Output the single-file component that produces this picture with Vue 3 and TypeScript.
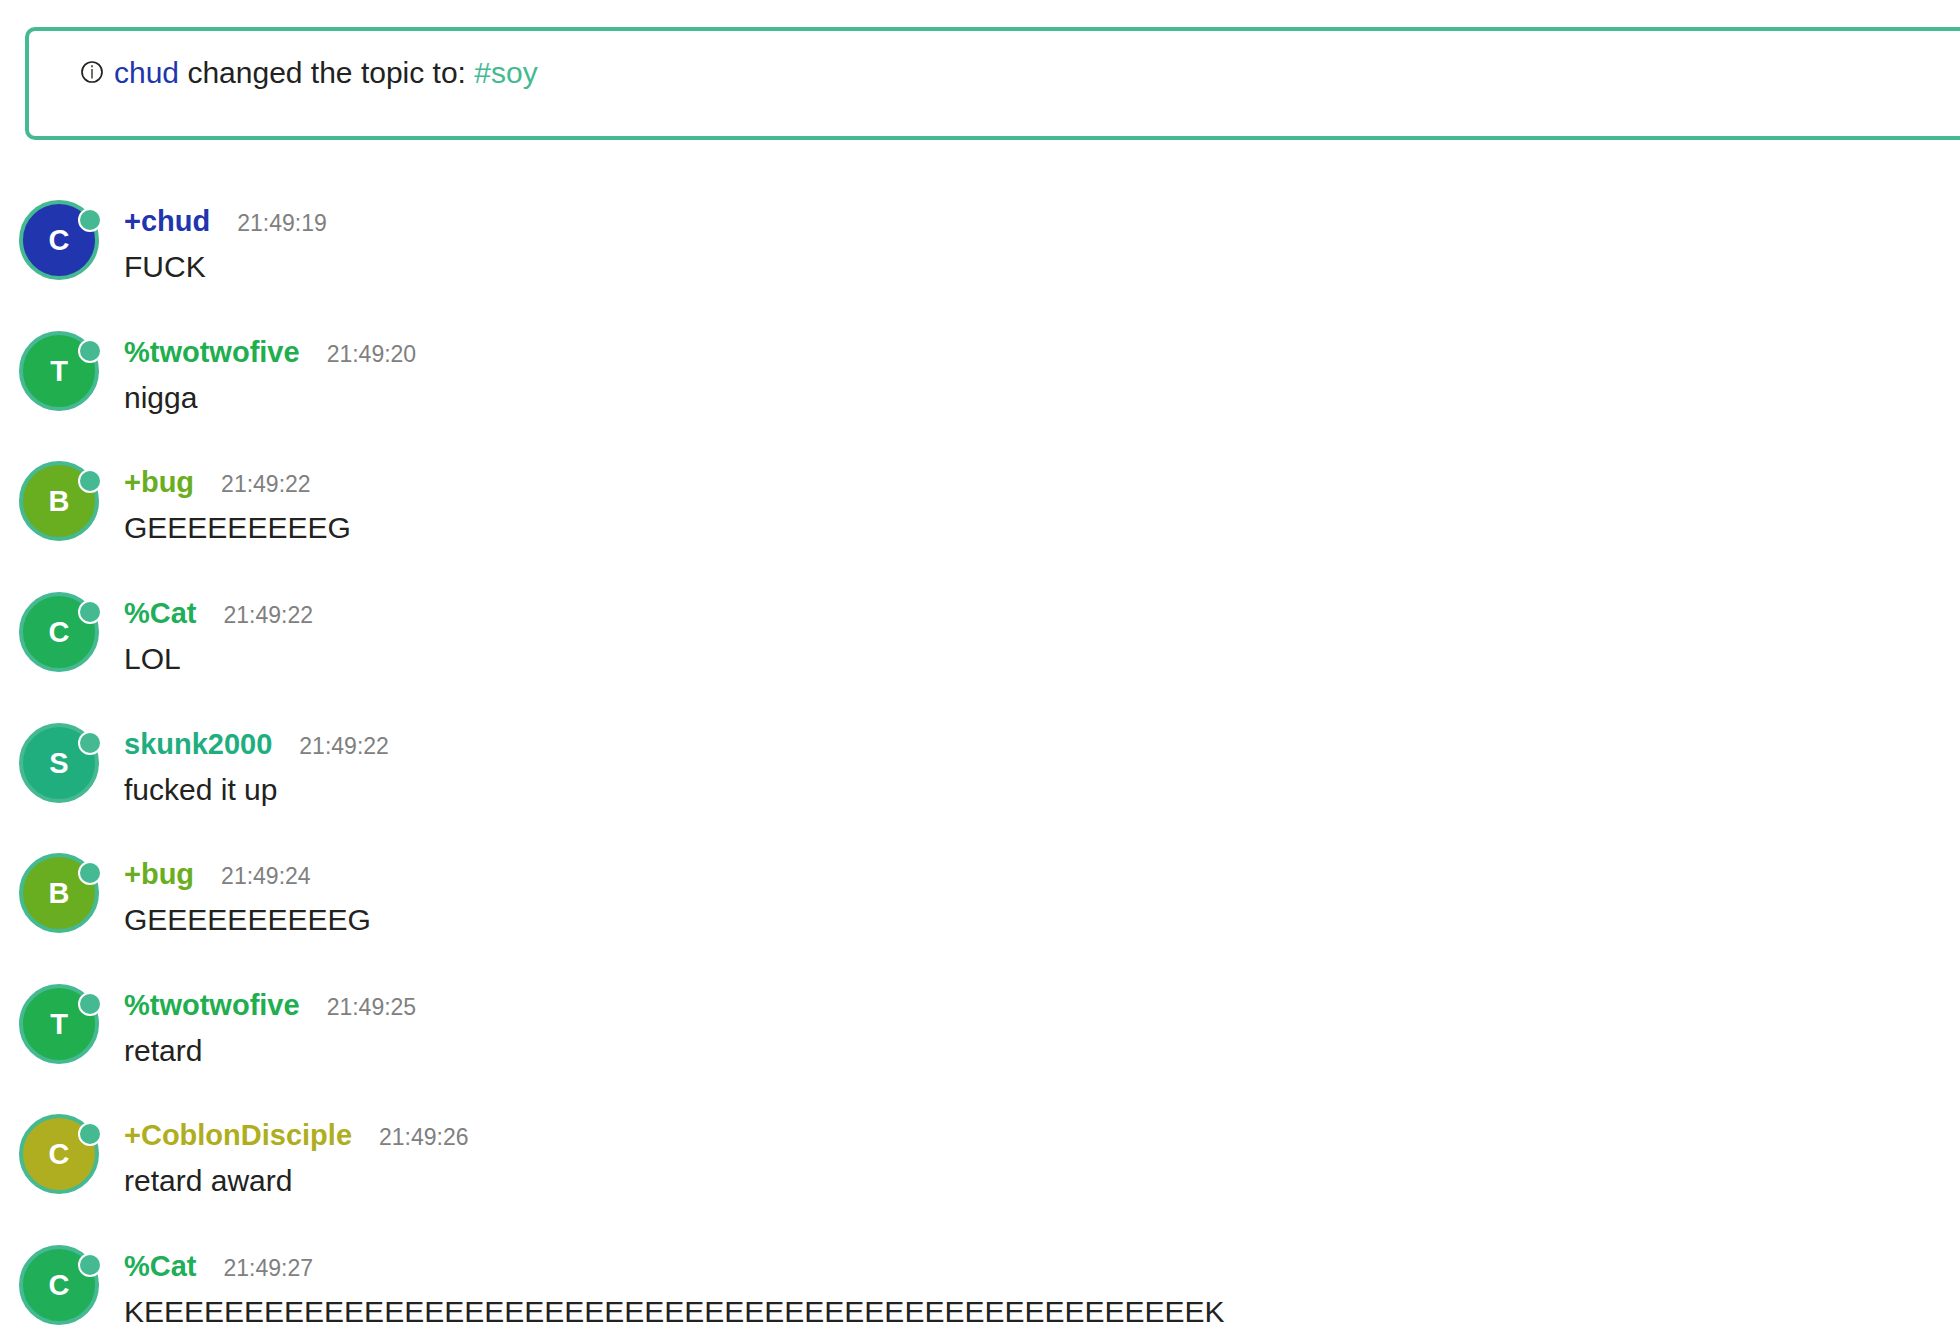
<script setup lang="ts">
interface Message {
  nick: string
  prefix: string
  time: string
  text: string
  color: string
}

const messages: Message[] = [
  { nick: 'chud', prefix: '+', time: '21:49:19', text: 'FUCK', color: '#2035ae' },
  { nick: 'twotwofive', prefix: '%', time: '21:49:20', text: 'nigga', color: '#20ae4f' },
  { nick: 'bug', prefix: '+', time: '21:49:22', text: 'GEEEEEEEEEG', color: '#68ae20' },
  { nick: 'Cat', prefix: '%', time: '21:49:22', text: 'LOL', color: '#20ae58' },
  { nick: 'skunk2000', prefix: '', time: '21:49:22', text: 'fucked it up', color: '#20ae7f' },
  { nick: 'bug', prefix: '+', time: '21:49:24', text: 'GEEEEEEEEEEG', color: '#68ae20' },
  { nick: 'twotwofive', prefix: '%', time: '21:49:25', text: 'retard', color: '#20ae4f' },
  { nick: 'CoblonDisciple', prefix: '+', time: '21:49:26', text: 'retard award', color: '#aeae20' },
  { nick: 'Cat', prefix: '%', time: '21:49:27', text: 'K' + 'E'.repeat(53) + 'K', color: '#20ae58' },
]
</script>

<template>
  <main class="chat">
    <section class="topic">
      <svg class="info" viewBox="0 0 22 22" aria-hidden="true">
        <circle cx="11" cy="11" r="10" fill="none" stroke="currentColor" stroke-width="1.7" />
        <path d="M11 8v9.5" stroke="currentColor" stroke-width="1.3" />
        <path d="M11 4.2v2" stroke="currentColor" stroke-width="1.5" />
      </svg>
      <p><span class="topic-nick">chud</span> changed the topic to: <a href="#soy">#soy</a></p>
    </section>
    <ul class="log">
      <li v-for="(m, i) in messages" :key="i" class="message">
        <div class="avatar" :style="{ backgroundColor: m.color }">
          {{ m.nick.charAt(0).toUpperCase() }}
          <span class="status"></span>
        </div>
        <div class="body">
          <div class="head">
            <span class="nick" :style="{ color: m.color }">{{ m.prefix }}{{ m.nick }}</span>
            <time>{{ m.time }}</time>
          </div>
          <p class="text">{{ m.text }}</p>
        </div>
      </li>
    </ul>
  </main>
</template>

<style>
body {
  margin: 0;
  background: #fff;
}
</style>

<style scoped>
.chat {
  display: flex;
  flex-direction: column;
  box-sizing: border-box;
  min-height: 100vh;
  padding: 27px 0 12px;
  overflow: hidden;
  color: #22221e;
  font-family: "Liberation Sans", Arial, sans-serif;
  font-size: 30px;
  line-height: 40px;
}

p {
  margin: 0;
}

.topic {
  display: flex;
  gap: 11px;
  margin: 0 -20px 60px 25px;
  padding: 22px 52px 43px;
  border: 4px solid #44b992;
  border-radius: 10px;
}

.info {
  width: 22px;
  height: 22px;
  margin-top: 8px;
}

.topic-nick {
  color: #2035ae;
}

a {
  color: #44b992;
  text-decoration: none;
}

.log {
  display: flex;
  flex: 1;
  flex-direction: column;
  justify-content: space-between;
  margin: 0;
  padding: 0;
  list-style: none;
}

.message {
  display: flex;
  gap: 25px;
  padding-left: 19px;
}

.avatar {
  position: relative;
  display: flex;
  flex: none;
  align-items: center;
  justify-content: center;
  box-sizing: border-box;
  width: 80px;
  height: 80px;
  border: 4px solid #44b992;
  border-radius: 50%;
  color: #fff;
  font-size: 29px;
  font-weight: 700;
}

.status {
  position: absolute;
  top: 4px;
  right: -7px;
  width: 20px;
  height: 20px;
  border: 2px solid #fff;
  border-radius: 50%;
  background: #44b992;
}

.body {
  padding-top: 1px;
}

.head {
  display: flex;
  align-items: baseline;
  gap: 27px;
}

.nick {
  font-size: 29px;
  font-weight: 700;
}

time {
  color: #808080;
  font-size: 23px;
  line-height: 24px;
}

.text {
  margin-top: 6px;
}
</style>
